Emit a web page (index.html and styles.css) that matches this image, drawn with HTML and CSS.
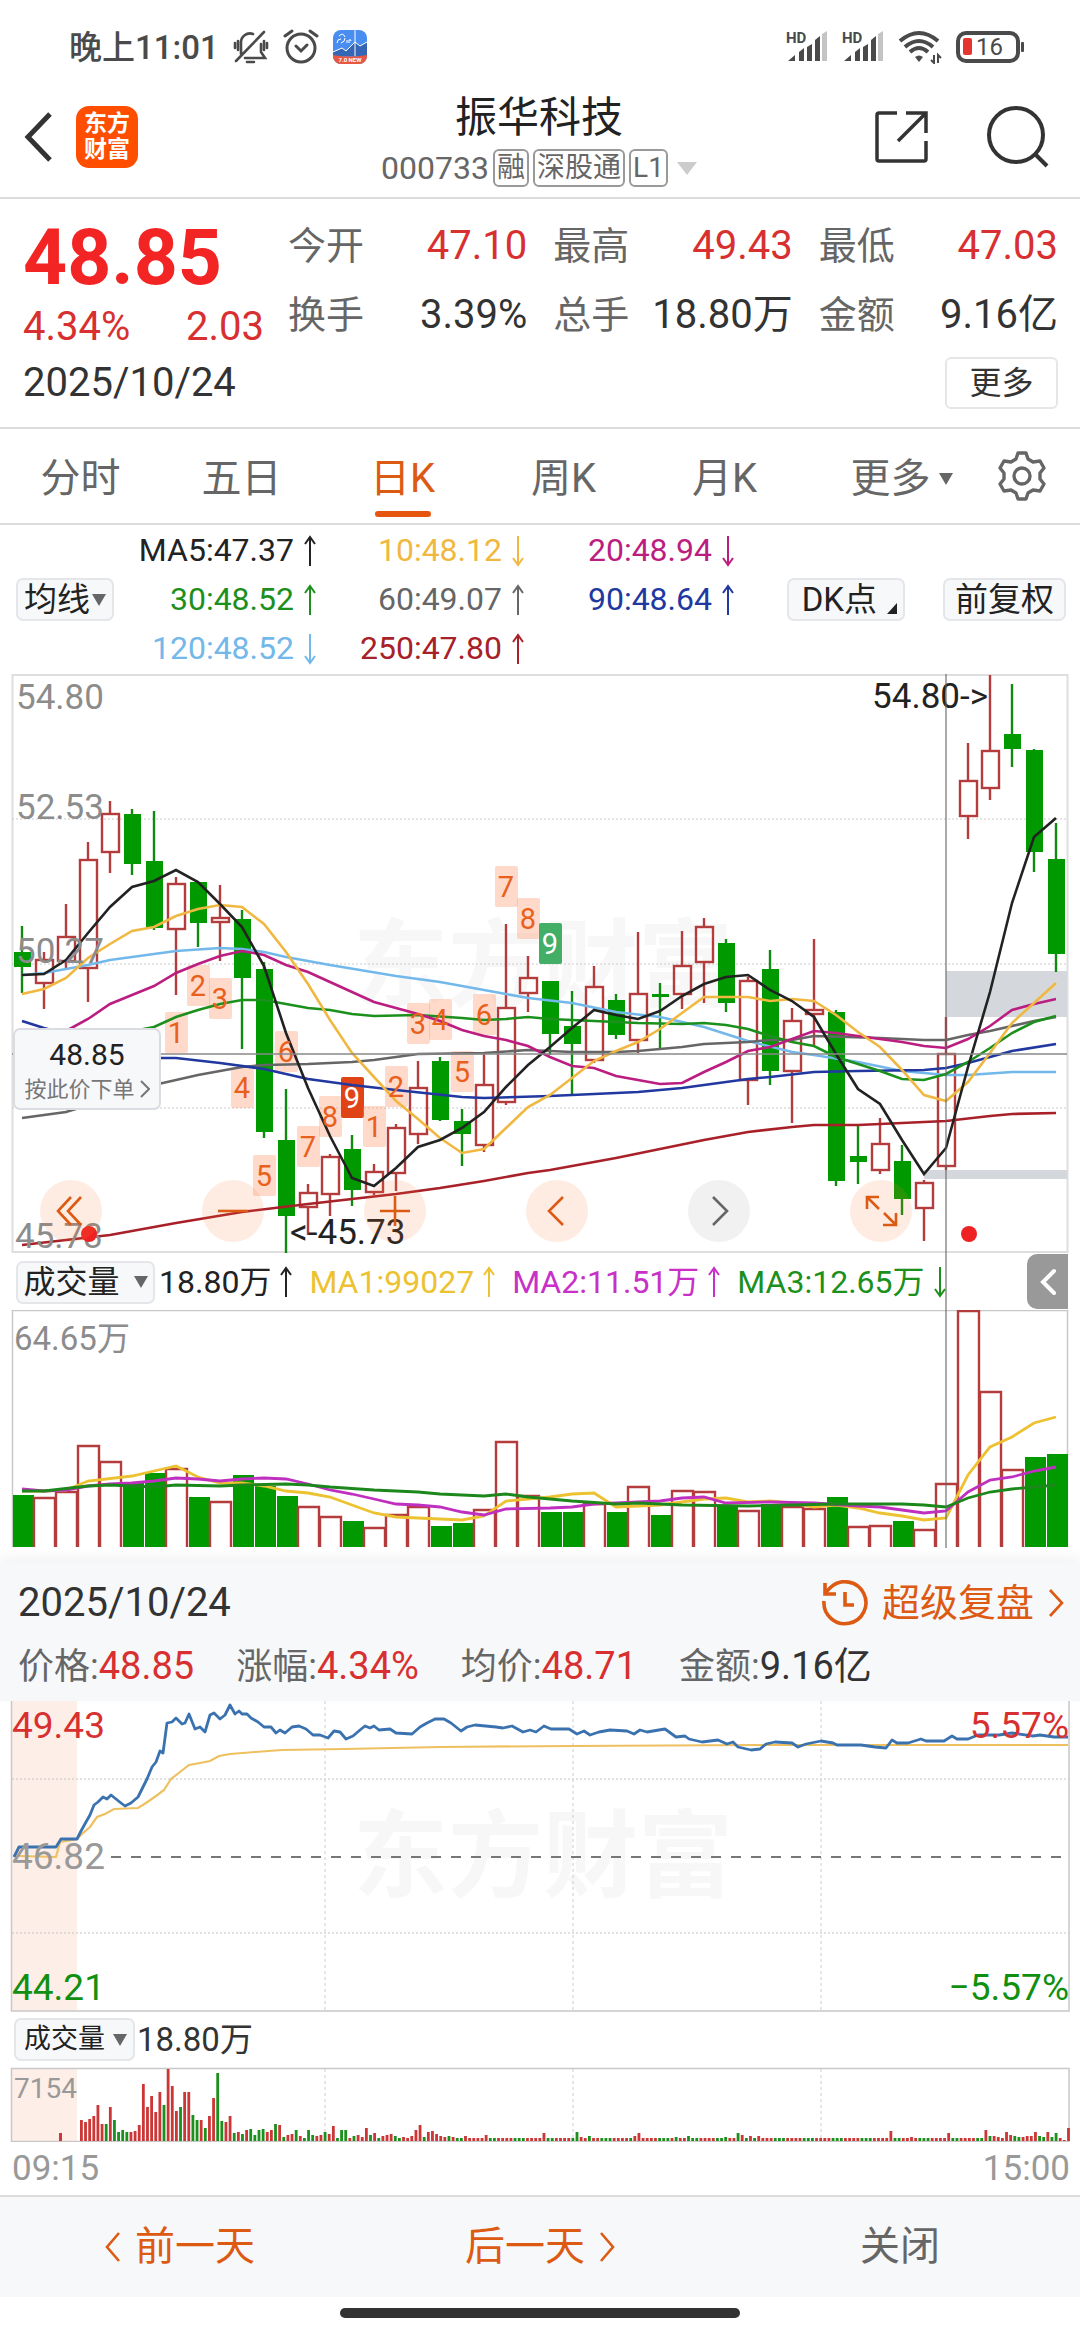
FILE: index.html
```
<!DOCTYPE html>
<html lang="zh-CN">
<head>
    <meta charset="UTF-8">
    <meta name="viewport" content="width=device-width, initial-scale=1.0">
    <title>振华科技 000733</title>
    <link rel="stylesheet" href="styles.css">
</head>
<body>
    <!-- Status bar -->
    <div class="status-bar">
        <span class="clock">晚上11:01</span>
        <svg class="status-icon" width="36" height="36" viewBox="0 0 36 36" fill="none" stroke="#4a4a4a" stroke-width="2.6" stroke-linecap="round">
            <path d="M8 25V14a9 9 0 0 1 12-9M28 15v8l4 6H12M31 3 3 32M14 33h7M2 14v5M5 12v9M31 12v9M34 14v5"/>
        </svg>
        <svg class="status-icon" width="36" height="36" viewBox="0 0 36 36" fill="none" stroke="#4a4a4a" stroke-width="3" stroke-linecap="round">
            <circle cx="18" cy="19" r="14"/>
            <path d="M2 7l7-5M34 7l-7-5M13 17l5 5 6-6"/>
        </svg>
        <svg class="status-icon" width="34" height="34" viewBox="0 0 34 34">
            <rect width="34" height="34" rx="8" fill="#4a8df0"/>
            <path d="M0 22l9-4 4 3 9-9 5 4 7-4v14H0z" fill="#3565b5"/>
            <path d="M0 22l9-4 4 3 9-9 5 4 7-4M22 0v26" stroke="#fff" fill="none"/>
            <path d="M0 25q17 3 34 0v1a8 8 0 0 1-8 8H8a8 8 0 0 1-8-8z" fill="#e8573f"/>
            <path d="M4 13q0-4 4-4M6 6q4-4 6 1M8 13q4-1 4-5M14 10v3M16 13v-3q2-1 2 1" stroke="#fff" fill="none"/>
            <text x="17" y="32" class="app-tag">7.0 NEW</text>
        </svg>
        <div class="status-right">
            <svg width="42" height="34" viewBox="0 0 42 34" fill="#4a4a4a">
                <text x="0" y="13" class="hd">HD</text>
                <path d="M2 31l7-6v6zM13 31v-9l5-4v13zM21 31V17l5-3v17zM29 31V10l5-4v25z"/>
                <path d="M36 31V4l5-3v30z" fill="#c4c4c4"/>
            </svg>
            <svg width="42" height="34" viewBox="0 0 42 34" fill="#4a4a4a">
                <text x="0" y="13" class="hd">HD</text>
                <path d="M2 31l7-6v6zM13 31v-9l5-4v13zM21 31V17l5-3v17zM29 31V10l5-4v25z"/>
                <path d="M36 31V4l5-3v30z" fill="#c4c4c4"/>
            </svg>
            <svg width="44" height="34" viewBox="0 0 44 34" fill="none" stroke="#4a4a4a" stroke-width="4">
                <path d="M2 11q19-16 38 0M7 17q14-12 28 0M12 22q9-8 18 0"/>
                <path d="M17 27q4-3 8 0l-4 5z" fill="#4a4a4a" stroke="none"/>
                <path d="M36 25v8l-3-3M40 33v-8l3 3" stroke-width="2"/>
            </svg>
            <svg width="70" height="32" viewBox="0 0 70 32" fill="none">
                <rect x="2" y="2" width="60" height="28" rx="8" stroke="#4a4a4a" stroke-width="4"/>
                <rect x="7" y="7" width="9" height="17" rx="2" fill="#e5352f"/>
                <rect x="65" y="11" width="3" height="10" rx="1" fill="#4a4a4a"/>
                <text x="20" y="24" class="battery">16</text>
            </svg>
        </div>
    </div>

    <!-- Header -->
    <header class="header">
        <button type="button" class="icon-btn" aria-label="返回">
            <svg width="30" height="50" viewBox="0 0 30 50" fill="none" stroke="#333" stroke-width="5"><path d="M26 2 4 25l22 23"/></svg>
        </button>
        <a href="#" class="logo"><span>东方</span><span>财富</span></a>
        <div class="title">
            <h1>振华科技</h1>
            <p class="code">000733 <span class="tag">融</span><span class="tag">深股通</span><span class="tag">L1</span><i class="tri tri-light"></i></p>
        </div>
        <button type="button" class="icon-btn share" aria-label="分享">
            <svg width="54" height="54" viewBox="0 0 54 54" fill="none" stroke="#333" stroke-width="3.5"><path d="M22 3H4a2 2 0 0 0-2 2v44a2 2 0 0 0 2 2h45a2 2 0 0 0 2-2V31M31 3h20v20M50 4 23 31"/></svg>
        </button>
        <button type="button" class="icon-btn search" aria-label="搜索">
            <svg width="64" height="62" viewBox="0 0 64 62" fill="none" stroke="#333" stroke-width="4"><circle cx="30" cy="29" r="27"/><path d="M49 48l12 12"/></svg>
        </button>
    </header>

    <!-- Quote -->
    <section class="quote">
        <div class="quote-top">
            <div class="price-box">
                <strong class="price">48.85</strong>
                <div class="change"><span>4.34%</span><span>2.03</span></div>
            </div>
            <dl class="stats">
                <div><dt>今开</dt><dd class="red">47.10</dd></div>
                <div><dt>最高</dt><dd class="red">49.43</dd></div>
                <div><dt>最低</dt><dd class="red">47.03</dd></div>
                <div><dt>换手</dt><dd>3.39%</dd></div>
                <div><dt>总手</dt><dd>18.80万</dd></div>
                <div><dt>金额</dt><dd>9.16亿</dd></div>
            </dl>
        </div>
        <div class="quote-bottom">
            <span>2025/10/24</span>
            <button type="button" class="more-btn">更多</button>
        </div>
    </section>

    <!-- Period tabs -->
    <nav class="tabs">
        <button type="button">分时</button>
        <button type="button">五日</button>
        <button type="button" class="active">日K</button>
        <button type="button">周K</button>
        <button type="button">月K</button>
        <button type="button" class="tab-more">更多<i class="tri"></i></button>
        <button type="button" class="tab-gear" aria-label="设置">
            <svg width="48" height="50" viewBox="0 0 48 50" fill="none" stroke="#666" stroke-width="3.4" stroke-linejoin="round">
                <path d="M20 2h8l2 6 5 3 7-1 4 7-4 5v6l4 5-4 7-7-1-5 3-2 6h-8l-2-6-5-3-7 1-4-7 4-5v-6l-4-5 4-7 7 1 5-3z"/>
                <circle cx="24" cy="25" r="8"/>
            </svg>
        </button>
    </nav>

    <!-- Moving average legend -->
    <section class="ma-bar">
        <button type="button" class="chip chip-ma">均线<i class="tri"></i></button>
        <div class="ma-grid">
            <span class="c-ma5">MA5:47.37<svg class="arr"><use href="#up"/></svg></span>
            <span class="c-ma10">10:48.12<svg class="arr"><use href="#down"/></svg></span>
            <span class="c-ma20">20:48.94<svg class="arr"><use href="#down"/></svg></span>
            <span class="c-ma30">30:48.52<svg class="arr"><use href="#up"/></svg></span>
            <span class="c-ma60">60:49.07<svg class="arr"><use href="#up"/></svg></span>
            <span class="c-ma90">90:48.64<svg class="arr"><use href="#up"/></svg></span>
            <span class="c-ma120">120:48.52<svg class="arr"><use href="#down"/></svg></span>
            <span class="c-ma250">250:47.80<svg class="arr"><use href="#up"/></svg></span>
        </div>
        <div class="ma-actions">
            <button type="button" class="chip chip-dk">DK点<i class="corner"></i></button>
            <button type="button" class="chip">前复权</button>
        </div>
    </section>

    <svg class="defs">
        <symbol id="up" viewBox="0 0 14 32"><path d="M7 31V2M2 9l5-7 5 7" fill="none" stroke="currentColor" stroke-width="2"/></symbol>
        <symbol id="down" viewBox="0 0 14 32"><path d="M7 1v29M2 23l5 7 5-7" fill="none" stroke="currentColor" stroke-width="2"/></symbol>
    </svg>

    <!-- Daily K chart and volume -->
    <section class="charts">
        <div class="k-wrap">
            <svg id="kChart" class="chart" viewBox="0 674 1080 580"></svg>
            <button type="button" class="order-tip"><b>48.85</b><span>按此价下单<svg width="10" height="20" viewBox="0 0 10 20" fill="none" stroke="#777" stroke-width="2"><path d="M1 2l8 8-8 8"/></svg></span></button>
            <div class="tools">
                <button type="button" aria-label="最前"><svg viewBox="0 0 62 62"><path d="M31 17 18 31l13 14M41 17 28 31l13 14"/></svg></button>
                <button type="button" aria-label="缩小"><svg viewBox="0 0 62 62"><path d="M16 31h30"/></svg></button>
                <button type="button" aria-label="放大"><svg viewBox="0 0 62 62"><path d="M16 31h30M31 16v30"/></svg></button>
                <button type="button" aria-label="左移"><svg viewBox="0 0 62 62"><path d="M37 17 23 31l14 14"/></svg></button>
                <button type="button" class="off" aria-label="右移"><svg viewBox="0 0 62 62"><path d="M25 17l14 14-14 14"/></svg></button>
                <button type="button" aria-label="全屏"><svg viewBox="0 0 62 62"><path d="M29 17H17v12M17 17l12 12M33 45h13V33M46 45 34 33"/></svg></button>
            </div>
        </div>
        <div class="vol-bar">
            <button type="button" class="chip chip-vol">成交量<i class="tri"></i></button>
            <span class="c-ma5">18.80万<svg class="arr"><use href="#up"/></svg></span>
            <span class="c-v1">MA1:99027<svg class="arr"><use href="#up"/></svg></span>
            <span class="c-v2">MA2:11.51万<svg class="arr"><use href="#up"/></svg></span>
            <span class="c-v3">MA3:12.65万<svg class="arr"><use href="#down"/></svg></span>
            <button type="button" class="drawer" aria-label="展开"><svg width="16" height="28" viewBox="0 0 16 28" fill="none" stroke="#fff" stroke-width="4" stroke-linecap="round"><path d="M14 3 3 14l11 11"/></svg></button>
        </div>
        <svg id="volChart" class="chart" viewBox="0 1310 1080 238"></svg>
        <div class="crosshair"></div>
    </section>

    <!-- Intraday panel -->
    <section class="panel">
        <div class="panel-head">
            <div class="panel-row">
                <span class="panel-date">2025/10/24</span>
                <a href="#" class="replay">
                    <svg width="46" height="46" viewBox="0 0 46 46" fill="none" stroke="#dd5a12" stroke-width="3.6"><path d="M2 21a21 21 0 1 0 7-14l-5 5M3 3v11h11M23 12v13h9"/></svg>
                    超级复盘
                    <svg width="16" height="30" viewBox="0 0 16 30" fill="none" stroke="#dd5a12" stroke-width="2.6"><path d="M2 2l12 13L2 28"/></svg>
                </a>
            </div>
            <div class="panel-info">
                <span>价格:<em class="red">48.85</em></span>
                <span>涨幅:<em class="red">4.34%</em></span>
                <span>均价:<em class="red">48.71</em></span>
                <span>金额:<em>9.16亿</em></span>
            </div>
        </div>
        <svg id="minChart" class="chart" viewBox="0 1701 1080 311"></svg>
        <div class="min-bar">
            <button type="button" class="chip chip-small">成交量<i class="tri"></i></button>
            <span>18.80万</span>
        </div>
        <svg id="minVol" class="chart" viewBox="0 2067 1080 75"></svg>
        <div class="times"><span>09:15</span><span>15:00</span></div>
    </section>

    <footer class="bottom-bar">
        <button type="button"><svg width="16" height="32" viewBox="0 0 16 32" fill="none" stroke="#dd5a12" stroke-width="2.6"><path d="M14 2 2 16l12 14"/></svg>前一天</button>
        <button type="button">后一天<svg width="16" height="32" viewBox="0 0 16 32" fill="none" stroke="#dd5a12" stroke-width="2.6"><path d="M2 2l12 14L2 30"/></svg></button>
        <button type="button" class="close">关闭</button>
    </footer>
    <div class="home"></div>

    <script src="charts.js"></script>
</body>
</html>
```

FILE: styles.css
```
* {
    box-sizing: border-box;
}
body {
    margin: 0;
    background-color: #fff;
    color: #333;
    font-family: Roboto, "Noto Sans CJK SC", sans-serif;
    font-size: 36px;
    line-height: 1;
}
button {
    background: none;
    border: none;
    padding: 0;
    margin: 0;
    font: inherit;
    color: inherit;
    cursor: pointer;
}
a {
    color: inherit;
    text-decoration: none;
}
h1, p, dl, dd {
    margin: 0;
    font-weight: normal;
}
svg {
    display: block;
    flex: none;
}
.red {
    color: #d83030;
}
.defs {
    position: absolute;
    width: 0;
    height: 0;
}

/* small triangles */
.tri {
    display: inline-block;
    border: 7px solid transparent;
    border-top: 12px solid #666;
    border-bottom: 0;
}
.tri-light {
    border-width: 13px 10px 0;
    border-top-color: #ccc;
    margin-left: 5px;
}
.corner {
    align-self: flex-end;
    margin-bottom: 5px;
    border-left: 10px solid transparent;
    border-bottom: 11px solid #222;
}

/* status bar */
.status-bar {
    display: flex;
    align-items: center;
    height: 94px;
    padding: 0 54px 0 69px;
    color: #4a4a4a;
}
.clock {
    font-size: 33px;
    font-weight: 500;
}
.status-icon {
    margin-left: 14px;
}
.status-right {
    display: flex;
    align-items: center;
    gap: 14px;
    margin-left: auto;
}
.hd {
    font-size: 15px;
    font-weight: 700;
}
.battery {
    font-size: 24px;
    fill: #4a4a4a;
}
.app-tag {
    font-size: 6px;
    font-weight: 700;
    fill: #fff;
    text-anchor: middle;
}

/* header */
.header {
    display: flex;
    align-items: center;
    height: 105px;
    padding: 0 30px 18px 24px;
    border-bottom: 2px solid #dcdcdc;
}
.logo {
    display: flex;
    flex-direction: column;
    justify-content: center;
    align-items: center;
    width: 62px;
    height: 62px;
    margin-left: 22px;
    border-radius: 13px;
    background-color: #ff4e00;
    color: #fff;
    font-size: 23px;
    font-weight: 700;
    line-height: 26px;
}
.title {
    flex: 1;
    padding: 8px 0 0 65px;
    text-align: center;
}
.title h1 {
    font-size: 42px;
    line-height: 48px;
    color: #222;
}
.code {
    display: flex;
    justify-content: center;
    align-items: center;
    gap: 4px;
    margin-top: 7px;
    font-size: 32px;
    line-height: 38px;
    color: #666;
}
.tag {
    height: 38px;
    padding: 0 2px;
    border: 2px solid #999;
    border-radius: 6px;
    font-size: 28px;
    line-height: 34px;
}
.share {
    margin-right: 57px;
}

/* quote */
.quote {
    height: 230px;
    padding: 20px 22px 0 23px;
    border-bottom: 2px solid #dcdcdc;
}
.quote-top {
    display: flex;
    gap: 24px;
}
.price-box {
    width: 241px;
}
.price {
    display: block;
    font-size: 77px;
    line-height: 78px;
    color: #f22424;
}
.change {
    display: flex;
    justify-content: space-between;
    margin-top: 8px;
    font-size: 40px;
    line-height: 44px;
    color: #d83030;
}
.stats {
    flex: 1;
    display: grid;
    grid-template-columns: 1fr 1fr 1fr;
    gap: 20px 26px;
    align-content: start;
    padding-top: 2px;
}
.stats div {
    display: flex;
    justify-content: space-between;
    align-items: center;
    height: 49px;
    font-size: 38px;
}
.stats dt {
    color: #666;
}
.stats dd {
    font-size: 40px;
}
.quote-bottom {
    display: flex;
    justify-content: space-between;
    align-items: center;
    margin-top: 8px;
    font-size: 40px;
}
.more-btn {
    width: 113px;
    height: 52px;
    border: 2px solid #e6e6e6;
    border-radius: 6px;
    font-size: 32px;
}

/* tabs */
.tabs {
    display: flex;
    height: 96px;
    border-bottom: 2px solid #dcdcdc;
    color: #666;
    font-size: 40px;
}
.tabs button {
    position: relative;
    flex: 161;
    padding-top: 5px;
}
.tabs .active {
    color: #dd5a12;
}
.tabs .active::after {
    content: "";
    position: absolute;
    left: 50%;
    bottom: 6px;
    width: 56px;
    height: 6px;
    margin-left: -28px;
    border-radius: 3px;
    background-color: #e6560e;
}
.tabs .tab-more {
    flex: 193;
    display: flex;
    justify-content: center;
    align-items: center;
    gap: 8px;
}
.tabs .tab-gear {
    flex: 82;
    display: flex;
    align-items: center;
    padding-top: 0;
}

/* buttons with pale background */
.chip {
    display: flex;
    justify-content: center;
    align-items: center;
    height: 43px;
    padding: 0 10px;
    border: 2px solid #e4e6ea;
    border-radius: 7px;
    background-color: #f7f8fa;
    color: #222;
    font-size: 33px;
}

/* moving averages */
.ma-bar {
    display: flex;
    align-items: center;
    height: 149px;
    padding: 0 14px 0 16px;
}
.chip-ma {
    gap: 2px;
    padding: 0 6px;
}
.ma-grid {
    display: grid;
    grid-template-columns: 203px 208px 210px;
    row-gap: 10px;
    font-size: 32px;
}
.ma-grid span {
    display: flex;
    justify-content: flex-end;
    align-items: center;
    gap: 9px;
    line-height: 39px;
}
.arr {
    width: 14px;
    height: 32px;
}
.ma-actions {
    display: flex;
    gap: 38px;
    margin-left: auto;
}
.chip-dk {
    gap: 10px;
    padding: 0 6px 0 13px;
}
.c-ma5 { color: #222; }
.c-ma10 { color: #f0b840; }
.c-ma20 { color: #bb1d80; }
.c-ma30 { color: #1c901c; }
.c-ma60 { color: #666; }
.c-ma90 { color: #2038a0; }
.c-ma120 { color: #72b8ea; }
.c-ma250 { color: #a82028; }
.c-v1 { color: #ecc230; }
.c-v2 { color: #c830c8; }
.c-v3 { color: #1c901c; }

/* charts */
.chart {
    width: 100%;
    height: auto;
}
.chart text {
    font-size: 35px;
}
.chart .watermark {
    font-size: 95px;
    font-weight: 700;
    fill: #f7f7f7;
}
.chart .mark {
    font-size: 29px;
    text-anchor: middle;
}
.chart .small {
    font-size: 28px;
}
#minChart .axis {
    font-size: 37px;
}
.charts {
    position: relative;
}
.crosshair {
    position: absolute;
    top: 0;
    bottom: 0;
    left: 87.5%;
    width: 2px;
    background-color: rgba(100, 100, 100, 0.55);
}
.k-wrap {
    position: relative;
}
.order-tip {
    position: absolute;
    left: 13px;
    top: 61%;
    width: 148px;
    height: 82px;
    padding-top: 3px;
    border: 2px solid #dadce2;
    border-radius: 7px;
    background-color: #f7f8fa;
}
.order-tip b {
    display: block;
    font-size: 30px;
    font-weight: 400;
    color: #222;
    margin-bottom: 9px;
}
.order-tip span {
    display: flex;
    justify-content: center;
    gap: 5px;
    font-size: 22px;
    color: #777;
}
.tools {
    position: absolute;
    left: 40px;
    right: 168px;
    bottom: 12px;
    display: flex;
    justify-content: space-between;
}
.tools button {
    width: 62px;
    height: 62px;
    border-radius: 50%;
    background-color: rgba(250, 120, 50, 0.14);
}
.tools .off {
    background-color: rgba(100, 100, 100, 0.09);
}
.tools path {
    fill: none;
    stroke: #dd5a12;
    stroke-width: 2.6;
}
.tools .off path {
    stroke: #666;
}
.vol-bar {
    position: relative;
    display: flex;
    align-items: center;
    gap: 16px;
    height: 56px;
    padding-left: 16px;
    font-size: 32px;
}
.vol-bar span {
    display: flex;
    align-items: center;
    gap: 8px;
}
.chip-vol {
    width: 139px;
    gap: 14px;
    padding: 0 4px;
    font-size: 32px;
    margin-right: -12px;
}
.drawer {
    position: absolute;
    right: 12px;
    top: 0;
    display: flex;
    justify-content: center;
    align-items: center;
    width: 41px;
    height: 55px;
    border-radius: 10px 0 0 10px;
    background-color: #999;
}

/* intraday panel */
.panel-head {
    margin-top: 15px;
    height: 138px;
    padding: 14px 16px 0 18px;
    background-color: #f7f8fa;
    box-shadow: 0 -6px 12px rgba(0, 0, 0, 0.05);
}
.panel-row {
    display: flex;
    justify-content: space-between;
    align-items: center;
    height: 52px;
}
.panel-date {
    font-size: 40px;
}
.replay {
    display: flex;
    align-items: center;
    gap: 14px;
    font-size: 38px;
    color: #dd5a12;
}
.panel-info {
    display: flex;
    gap: 42px;
    margin-top: 16px;
    line-height: 42px;
    color: #666;
}
.panel-info em {
    font-size: 38px;
    font-style: normal;
    color: #333;
}
.panel-info .red {
    color: #d83030;
}
.min-bar {
    display: flex;
    align-items: center;
    gap: 2px;
    height: 55px;
    padding-left: 14px;
    font-size: 33px;
}
.chip-small {
    gap: 8px;
    padding: 0 6px 0 8px;
    font-size: 27px;
}
.times {
    display: flex;
    justify-content: space-between;
    align-items: center;
    height: 53px;
    padding: 0 10px 0 12px;
    font-size: 35px;
    color: #999;
}

/* bottom */
.bottom-bar {
    display: flex;
    height: 102px;
    border-top: 2px solid #dcdcdc;
    background-color: #f7f8fa;
    color: #dd5a12;
    font-size: 40px;
}
.bottom-bar button {
    flex: 1;
    display: flex;
    justify-content: center;
    align-items: center;
    gap: 14px;
}
.bottom-bar .close {
    color: #666;
}
.home {
    width: 37%;
    height: 10px;
    margin: 11px auto 0;
    border-radius: 5px;
    background-color: #333;
}
```

FILE: charts.js
```
var RED = '#b43c3c';
var GREEN = '#009a00';

function add(svg, name, attrs, text) {
    var el = document.createElementNS('http://www.w3.org/2000/svg', name);
    for (var key in attrs) {
        el.setAttribute(key, attrs[key]);
    }
    if (text) {
        el.textContent = text;
    }
    svg.appendChild(el);
    return el;
}

function line(svg, x1, y1, x2, y2, color, width, dash) {
    add(svg, 'line', { x1: x1, y1: y1, x2: x2, y2: y2, stroke: color, 'stroke-width': width, 'stroke-dasharray': dash || 'none' });
}

function label(svg, x, y, text, color, anchor) {
    add(svg, 'text', { x: x, y: y, fill: color, 'class': 'axis', 'text-anchor': anchor || 'start' }, text);
}

function candleX(i) {
    return 22 + 22 * i;
}

// flat list: index, y, index, y ...
function indexLine(svg, list, color, width) {
    var pts = [];
    for (var i = 0; i < list.length; i += 2) {
        pts.push(candleX(list[i]) + ',' + list[i + 1]);
    }
    add(svg, 'polyline', { points: pts.join(' '), fill: 'none', stroke: color, 'stroke-width': width });
}

/* ---------- daily K ---------- */
var k = document.getElementById('kChart');

// colour, high, body top, body bottom, low
var candles = [
    ['g', 926, 952, 967, 993], ['r', 952, 960, 983, 1009], ['r', 904, 937, 961, 968], ['r', 842, 860, 968, 1002],
    ['r', 801, 814, 852, 873], ['g', 809, 814, 864, 875], ['g', 811, 861, 928, 930], ['r', 877, 884, 929, 995],
    ['g', 882, 882, 923, 947], ['r', 885, 918, 922, 961], ['g', 910, 919, 978, 1049], ['g', 962, 969, 1132, 1138],
    ['g', 1089, 1140, 1216, 1253], ['r', 1184, 1193, 1207, 1235], ['r', 1154, 1157, 1194, 1216], ['g', 1135, 1149, 1190, 1206],
    ['r', 1164, 1172, 1192, 1195], ['r', 1124, 1128, 1173, 1191], ['r', 1061, 1088, 1134, 1144], ['g', 1057, 1061, 1120, 1121],
    ['g', 1109, 1121, 1134, 1166], ['r', 1054, 1085, 1145, 1152], ['r', 924, 1008, 1102, 1105], ['r', 956, 978, 993, 1012],
    ['g', 981, 981, 1034, 1055], ['g', 991, 1026, 1044, 1094], ['r', 966, 987, 1060, 1063], ['g', 994, 1000, 1035, 1039],
    ['r', 932, 994, 1040, 1053], ['g', 983, 994, 997, 1049], ['r', 931, 966, 994, 1009], ['r', 918, 927, 962, 1003],
    ['g', 939, 943, 1003, 1012], ['r', 977, 981, 1080, 1105], ['g', 950, 969, 1071, 1085], ['r', 1008, 1021, 1071, 1123],
    ['r', 939, 1010, 1014, 1045], ['g', 1010, 1012, 1181, 1186], ['g', 1126, 1156, 1162, 1184], ['r', 1118, 1144, 1170, 1174],
    ['g', 1145, 1161, 1199, 1215], ['r', 1180, 1183, 1208, 1241], ['r', 1017, 1054, 1166, 1170], ['r', 743, 781, 816, 839],
    ['r', 675, 751, 788, 800], ['g', 684, 734, 749, 767], ['g', 749, 750, 852, 872], ['g', 823, 859, 954, 972]
];

var averages = [
    ['#72b8ea', [0,975, 1,973, 2,969, 3,965, 4,960, 5,957, 6,954, 7,951, 9,948, 10,949, 11,952, 12,957, 14,965, 17,976, 19,982, 21,990, 23,998, 25,1003, 27,1012, 29,1017, 31,1027, 33,1041, 35,1052, 36,1055, 38,1062, 40,1071, 42,1075, 43,1075, 45,1072, 47,1072]],
    ['#a82028', [0,1245, 4,1235, 7,1223, 10,1212, 13,1204, 15,1199, 17,1194, 19,1188, 21,1181, 23,1173, 24,1170, 27,1158, 29,1149, 31,1140, 33,1132, 35,1127, 36,1125, 38,1125, 39,1124, 42,1121, 44,1116, 45,1114, 47,1113]],
    ['#666', [0,1118, 2,1112, 6,1085, 8,1075, 10,1067, 11,1065, 13,1064, 15,1062, 16,1060, 18,1054, 21,1053, 23,1050, 25,1052, 27,1052, 28,1051, 30,1047, 31,1044, 33,1042, 34,1040, 35,1040, 36,1036, 39,1038, 41,1040, 42,1040, 43,1035, 44,1031, 46,1021, 47,1017]],
    ['#2038a0', [0,1021, 1,1028, 3,1040, 6,1058, 7,1058, 9,1063, 11,1069, 13,1079, 15,1085, 17,1090, 20,1097, 21,1098, 24,1096, 26,1094, 28,1092, 30,1088, 33,1079, 34,1077, 36,1072, 38,1071, 41,1070, 42,1068, 43,1063, 45,1051, 47,1044]],
    ['#1c901c', [0,1052, 6,1027, 7,1017, 8,1010, 9,1004, 10,1000, 11,1000, 12,1004, 13,1008, 14,1010, 15,1014, 16,1016, 18,1015, 20,1018, 21,1020, 22,1019, 23,1017, 24,1019, 28,1023, 30,1024, 31,1023, 32,1025, 33,1029, 34,1036, 35,1042, 36,1046, 37,1057, 38,1064, 39,1071, 40,1079, 41,1080, 42,1074, 43,1062, 44,1048, 45,1033, 46,1022, 47,1016]],
    ['#bb1d80', [0,1056, 2,1031, 3,1019, 4,1004, 5,995, 6,986, 7,973, 8,964, 9,956, 10,951, 11,955, 12,965, 13,972, 14,982, 15,992, 16,1002, 17,1008, 18,1014, 19,1021, 20,1030, 21,1036, 22,1040, 23,1046, 24,1057, 25,1066, 26,1068, 27,1076, 28,1080, 29,1084, 30,1083, 31,1072, 32,1062, 33,1051, 34,1047, 35,1039, 36,1031, 37,1033, 38,1036, 40,1042, 41,1046, 42,1048, 43,1039, 44,1026, 45,1010, 46,1004, 47,999]],
    ['#f0b840', [0,994, 1,989, 2,978, 3,958, 4,944, 5,931, 6,927, 7,916, 8,909, 9,905, 10,907, 11,924, 12,952, 13,984, 14,1020, 15,1053, 16,1077, 17,1101, 18,1119, 19,1138, 20,1153, 21,1149, 22,1128, 23,1107, 24,1095, 25,1078, 26,1061, 27,1051, 28,1042, 29,1029, 30,1013, 31,997, 33,997, 34,1001, 35,999, 36,1001, 37,1015, 38,1032, 39,1047, 40,1070, 41,1095, 42,1101, 43,1082, 44,1053, 45,1023, 46,1003, 47,983]],
    ['#222', [0,975, 1,974, 2,960, 3,933, 4,907, 5,887, 6,881, 7,870, 8,882, 9,904, 10,927, 11,966, 12,1033, 13,1088, 14,1136, 15,1178, 16,1186, 17,1168, 18,1147, 19,1140, 20,1128, 21,1112, 22,1087, 23,1065, 24,1047, 25,1028, 26,1010, 27,1015, 28,1019, 29,1011, 30,996, 31,984, 32,977, 33,975, 34,990, 35,1001, 36,1017, 37,1054, 38,1089, 39,1104, 40,1140, 41,1174, 42,1148, 43,1067, 44,992, 45,903, 46,837, 47,818]]
];

// candle index, box top, digit
var marks = [
    [7, 1012, '1'], [8, 965, '2'], [9, 978, '3'], [10, 1067, '4'], [11, 1155, '5'], [12, 1031, '6'], [13, 1126, '7'],
    [14, 1096, '8'], [15, 1077, '9', '#e04416'], [16, 1106, '1'], [17, 1066, '2'], [18, 1003, '3'], [19, 999, '4'],
    [20, 1051, '5'], [21, 994, '6'], [22, 866, '7'], [23, 898, '8'], [24, 923, '9', '#42ae66']
];

add(k, 'text', { x: 353, y: 999, 'class': 'watermark' }, '东方财富');
add(k, 'rect', { x: 12.5, y: 675, width: 1055, height: 577, fill: 'none', stroke: '#dedede', 'stroke-width': 2 });
[819, 964, 1108].forEach(function (y) {
    line(k, 12, y, 1067, y, '#ccc', 1, '2 2');
});
add(k, 'rect', { x: 946, y: 971, width: 121, height: 46, fill: '#d4d7dc' });
add(k, 'rect', { x: 924, y: 1170, width: 143, height: 9, fill: '#d4d7dc' });

candles.forEach(function (c, i) {
    var x = candleX(i);
    if (c[0] === 'g') {
        line(k, x, c[1], x, c[4], '#108a10', 2.4);
        add(k, 'rect', { x: x - 8, y: c[2], width: 17, height: c[3] - c[2], fill: GREEN });
    } else {
        line(k, x, c[1], x, c[2], RED, 2.4);
        line(k, x, c[3], x, c[4], RED, 2.4);
        add(k, 'rect', { x: x - 8, y: c[2], width: 17, height: c[3] - c[2], fill: 'none', stroke: RED, 'stroke-width': 2.4 });
    }
});
marks.forEach(function (m) {
    var x = candleX(m[0]);
    add(k, 'rect', { x: x - 11, y: m[1], width: 23, height: 41, rx: 2, fill: m[3] || '#ff9060', 'fill-opacity': m[3] ? 1 : 0.34 });
});
averages.forEach(function (a) {
    indexLine(k, a[1], a[0], 2.6);
});
marks.forEach(function (m) {
    add(k, 'text', { x: candleX(m[0]), y: m[1] + 31, 'class': 'mark', fill: m[3] ? '#fff' : '#e8601c' }, m[2]);
});
line(k, 12, 1054, 1067, 1054, '#888', 1.5);
label(k, 16, 709, '54.80', '#8c8c8c');
label(k, 16, 819, '52.53', '#8c8c8c');
label(k, 16, 963, '50.27', '#8c8c8c');
label(k, 15, 1248, '45.73', '#8c8c8c');
label(k, 988, 708, '54.80->', '#222', 'end');
label(k, 290, 1244, '<-45.73', '#222');
add(k, 'circle', { cx: 89, cy: 1234, r: 8, fill: '#ee2222' });
add(k, 'circle', { cx: 969, cy: 1234, r: 8, fill: '#ee2222' });

/* ---------- daily volume ---------- */
var v = document.getElementById('volChart');
var volTops = [1495, 1498, 1492, 1446, 1462, 1482, 1473, 1469, 1497, 1502, 1475, 1486, 1496, 1507, 1517, 1521, 1528, 1515, 1507, 1526, 1523, 1510, 1442, 1496,
    1512, 1512, 1504, 1512, 1487, 1515, 1491, 1492, 1505, 1511, 1504, 1507, 1509, 1497, 1527, 1526, 1521, 1530, 1484, 1311, 1392, 1470, 1457, 1454];
var volGreen = [0, 5, 6, 8, 10, 11, 12, 15, 19, 20, 24, 25, 27, 29, 32, 34, 37, 40, 46, 47];

add(v, 'path', { d: 'M12.5 1547V1310.5H1067.5V1547', fill: 'none', stroke: '#c8c8c8', 'stroke-width': 1.5 });
volTops.forEach(function (top, i) {
    var x = candleX(i);
    if (volGreen.indexOf(i) > -1) {
        add(v, 'rect', { x: x - 9, y: top, width: 21, height: 1547 - top, fill: GREEN });
    } else {
        add(v, 'path', { d: 'M' + (x - 10) + ' 1547V' + top + 'H' + (x + 11) + 'V1547', fill: '#fff', stroke: RED, 'stroke-width': 2.4 });
    }
});
indexLine(v, [0,1491, 1,1491, 2,1490, 3,1481, 5,1476, 6,1471, 7,1466, 8,1477, 9,1483, 10,1483, 11,1486, 12,1491, 13,1493, 14,1497, 15,1505, 16,1513, 17,1517, 18,1518, 19,1519, 20,1520, 21,1516, 22,1501, 23,1499, 24,1497, 25,1494, 26,1493, 27,1507, 28,1506, 29,1505, 30,1502, 31,1499, 32,1498, 33,1502, 34,1501, 35,1503, 36,1507, 37,1505, 38,1508, 39,1513, 40,1516, 41,1520, 42,1518, 43,1475, 44,1447, 45,1437, 46,1423, 47,1417], '#ecc230', 2.8);
indexLine(v, [0,1489, 1,1491, 2,1490, 3,1486, 4,1484, 5,1483, 6,1481, 7,1478, 8,1479, 9,1481, 10,1479, 11,1478, 12,1479, 13,1484, 14,1490, 15,1494, 16,1499, 17,1504, 18,1505, 19,1507, 20,1512, 21,1515, 22,1509, 24,1508, 25,1507, 26,1504, 28,1502, 29,1501, 30,1498, 31,1497, 32,1503, 34,1502, 36,1503, 38,1506, 39,1507, 40,1510, 41,1513, 42,1511, 43,1492, 44,1480, 45,1477, 46,1471, 47,1467], '#c030c0', 2.8);
indexLine(v, [0,1491, 1,1491, 3,1486, 4,1485, 6,1487, 7,1485, 9,1486, 10,1485, 12,1484, 13,1485, 14,1487, 16,1490, 18,1492, 19,1494, 21,1496, 22,1494, 23,1497, 25,1501, 27,1504, 28,1503, 30,1505, 33,1506, 35,1505, 37,1504, 40,1504, 41,1505, 42,1507, 43,1498, 44,1492, 45,1489, 46,1487, 47,1485], '#1c881c', 2.8);
add(v, 'text', { x: 14, y: 1350, fill: '#8c8c8c' }, '64.65万').style.fontSize = '33px';

/* ---------- intraday ---------- */
var m = document.getElementById('minChart');
add(m, 'text', { x: 353, y: 1890, 'class': 'watermark' }, '东方财富');
add(m, 'rect', { x: 11, y: 1701, width: 66, height: 310, fill: '#fdeee8' });
add(m, 'path', { d: 'M11.5 1701V2011H1069V1701', fill: 'none', stroke: '#c8c8c8', 'stroke-width': 1.5 });
[325, 573, 821].forEach(function (x) {
    line(m, x, 1701, x, 2011, '#ccc', 1, '3 3');
});
line(m, 12, 1779, 1069, 1779, '#c4c4c4', 1, '2 2');
line(m, 12, 1933, 1069, 1933, '#c4c4c4', 1, '2 2');
line(m, 111, 1857, 1062, 1857, '#777', 1.8, '10 10');

add(m, 'polyline', {
    points: '19,1856 56,1857 60,1842 77,1839 83,1833 90,1827 97,1817 105,1814 114,1809 138,1808 146,1803 156,1796 164,1790 171,1779 180,1772 189,1765 200,1763 210,1761 219,1756 230,1754 255,1752 282,1750 344,1749 441,1747 572,1746 758,1745 1068,1745',
    fill: 'none', stroke: '#eec060', 'stroke-width': 2.2
});
add(m, 'polyline', {
    points: '14,1857 19,1847 56,1847 61,1839 77,1839 81,1831 86,1822 90,1815 94,1805 98,1802 103,1797 107,1799 111,1795 116,1799 121,1803 125,1806 131,1803 138,1797 143,1787 147,1779 152,1767 156,1762 160,1751 163,1753 167,1723 172,1722 176,1718 182,1724 185,1723 189,1714 195,1729 200,1727 205,1732 210,1715 214,1713 220,1719 225,1715 230,1705 235,1714 239,1711 242,1714 247,1714 251,1718 258,1722 264,1727 271,1727 276,1733 280,1730 285,1733 292,1727 299,1726 306,1729 313,1735 320,1735 328,1738 334,1731 340,1732 346,1739 353,1736 360,1730 365,1726 370,1728 374,1726 379,1730 390,1729 396,1733 412,1734 420,1727 427,1723 435,1719 444,1719 451,1723 461,1731 467,1727 475,1725 496,1727 503,1728 512,1726 523,1732 530,1730 536,1732 544,1726 551,1729 569,1729 577,1734 584,1731 590,1735 599,1732 610,1730 627,1731 634,1734 640,1730 647,1732 665,1729 676,1737 685,1736 689,1739 702,1742 718,1740 727,1744 733,1742 738,1747 751,1750 760,1749 766,1744 775,1742 792,1743 798,1747 806,1744 821,1741 833,1743 837,1745 861,1745 875,1747 886,1748 892,1740 897,1743 908,1743 921,1739 926,1741 944,1741 952,1736 957,1739 968,1739 978,1735 999,1735 1012,1733 1033,1736 1040,1735 1054,1737 1068,1737',
    fill: 'none', stroke: '#3a72b0', 'stroke-width': 2.8, 'stroke-linejoin': 'round'
});
label(m, 12, 1738, '49.43', '#d83030');
label(m, 12, 1869, '46.82', '#999');
label(m, 12, 2000, '44.21', '#109010');
label(m, 1069, 1738, '5.57%', '#d83030', 'end');
label(m, 1069, 2000, '−5.57%', '#109010', 'end');

/* ---------- intraday volume ---------- */
var mv = document.getElementById('minVol');
// bar heights by minute, negative means a falling minute
var bars = [21, 19, 22, 25, 36, 17, -17, 34, -21, -9, -11, -9, 9, 10, 16, 57, 34, 45, 29, 49, -36, 72, 55, 30, -34, 49, 49, -26, -21, 21, -13, 25, 43, -68, -20, 19, 25, -8, 9, -7,
    11, -12, -6, -11, -12, 9, 11, -17, 16, -4, 6, 7, -11, 5, -3, -11, -6, 5, 6, -9, 7, 15, -3, -11, -11, 3, -5, 6, 4, 13, -6, 8, -3, 5, 6, 7, -5, -3, 4, 3, 5, 11, 16, -4, 9, 10, 7, 5, 4, -5, 4];
var peaks = {
    93: 5, 98: 6, 112: 8, 120: -9, 121: 4, 123: -5, 134: 5, 135: 8, 144: -4, 147: -5, 156: -4, 159: -8, 160: 6, 162: 5, 164: 5, 196: 10, 201: 4, 210: 8,
    219: 11, 220: -5, 221: 5, 222: 4, 224: 9, 225: 6, 226: -5, 227: -4, 228: 4, 229: 5, 230: 5, 231: 9, 232: -5, 233: -4, 234: 9, 235: -4, 236: -8, 237: 3, 238: 1, 239: 13
};
add(mv, 'rect', { x: 11, y: 2068, width: 66, height: 73, fill: '#fdeee8' });
add(mv, 'rect', { x: 11.5, y: 2068.5, width: 1057.5, height: 73, fill: 'none', stroke: '#c8c8c8', 'stroke-width': 1.5 });
[325, 573, 821].forEach(function (x) {
    line(mv, x, 2069, x, 2141, '#ccc', 1, '3 3');
});
add(mv, 'rect', { x: 59, y: 2133, width: 3, height: 8, fill: '#d03838' });
for (var i = 0; i < 240; i++) {
    var h = bars[i] || peaks[i] || (i % 7 < 3 ? -3 : 3);
    add(mv, 'rect', { x: 80 + i * 4.13, y: 2141 - Math.abs(h), width: 2.8, height: Math.abs(h), fill: h < 0 ? '#1c901c' : '#cc3636' });
}
add(mv, 'text', { x: 14, y: 2098, 'class': 'small', fill: '#999' }, '7154');
```
